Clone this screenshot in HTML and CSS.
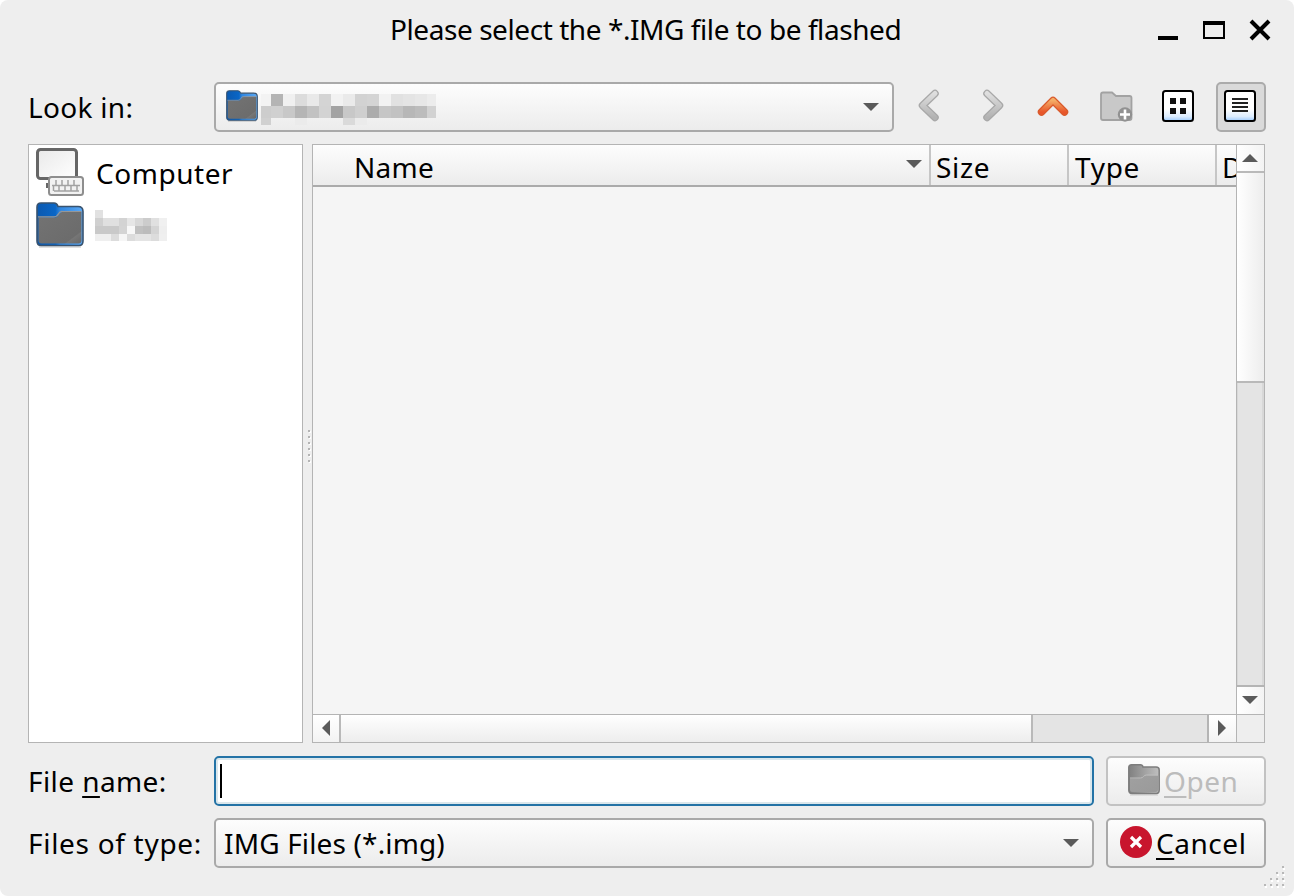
FILE: index.html
```html
<!DOCTYPE html>
<html lang="en">
<head>
<meta charset="utf-8">
<title>Please select the *.IMG file to be flashed</title>
<link rel="stylesheet" href="styles.css">
</head>
<body>
<svg class="defs" width="0" height="0">
  <defs>
    <linearGradient id="blue" x1="0" y1="0" x2="1" y2="0"><stop offset="0" stop-color="#0b59b0"/><stop offset=".4" stop-color="#0a66c6"/><stop offset=".5" stop-color="#2f86e0"/><stop offset="1" stop-color="#5ca9f5"/></linearGradient>
    <linearGradient id="front" x1="0" y1="0" x2="1" y2="1"><stop offset="0" stop-color="#737373"/><stop offset=".8" stop-color="#6c6c6c"/><stop offset=".82" stop-color="#767676"/><stop offset="1" stop-color="#666"/></linearGradient>
    <linearGradient id="gback" x1="0" y1="0" x2="1" y2="0"><stop offset="0" stop-color="#808080"/><stop offset="1" stop-color="#c0c0c0"/></linearGradient>
    <linearGradient id="gfront" x1="0" y1="0" x2="1" y2="1"><stop offset="0" stop-color="#a0a0a0"/><stop offset="1" stop-color="#9a9a9a"/></linearGradient>
    <linearGradient id="screen" x1="0" y1="0" x2="1" y2="1"><stop offset="0" stop-color="#e9e9e9"/><stop offset="1" stop-color="#fff"/></linearGradient>
    <linearGradient id="chev" x1="0" y1="0" x2="0" y2="1"><stop offset="0" stop-color="#dedede"/><stop offset="1" stop-color="#b2b2b2"/></linearGradient>
    <linearGradient id="orange" x1="0" y1="0" x2="0" y2="1"><stop offset="0" stop-color="#f4ad66"/><stop offset="1" stop-color="#e8562a"/></linearGradient>
    <linearGradient id="tile" x1="0" y1="0" x2="0" y2="1"><stop offset="0" stop-color="#fff"/><stop offset=".6" stop-color="#fff"/><stop offset=".85" stop-color="#dcedff"/><stop offset="1" stop-color="#9ccbff"/></linearGradient>
    <symbol id="folder" viewBox="0 0 48 46" preserveAspectRatio="none">
      <path d="M3 45h42" stroke="#000" stroke-opacity=".12" stroke-width="2"/>
      <path d="M1 5q0-4 4-4h13q3 0 4 3.500h20q5 0 5 5V39q0 4.500-4 4.500H5q-4 0-4-4.500z" fill="url(#blue)" stroke="#39536f" stroke-width="1.600"/>
      <path d="M2.500 15.500h16q3 0 4.500-3t4-2.500h18.500V38.500q0 3-3 3H5.500q-3 0-3-3z" fill="url(#front)"/>
      <path d="M2 14.800h16q3 0 4.500-3t4.500-2.300h18.500" fill="none" stroke="#969696" stroke-width="1.200"/>
    </symbol>
  </defs>
</svg>
<main class="dialog">
  <header class="titlebar">
    <h1 class="title">Please select the *.IMG file to be flashed</h1>
    <svg class="winbtns" width="116" height="24" viewBox="1158 18 116 24">
      <path d="M1158 38h20" stroke="#000" stroke-width="4"/>
      <rect x="1204" y="22" width="20" height="16" fill="none" stroke="#000" stroke-width="2"/>
      <path d="M1203 23h22" stroke="#000" stroke-width="4"/>
      <path d="M1251 21l18 18M1269 21l-18 18" stroke="#000" stroke-width="4"/>
    </svg>
  </header>

  <div class="row">
    <label class="label s-look">Look in:</label>
    <div class="combo look">
      <svg class="ico-sm" width="32" height="32"><use href="#folder"/></svg>
      <svg class="mosaic" width="175" height="31" viewBox="261 94 175 31" shape-rendering="crispEdges">
        <path fill="#f3f3f3" d="M261 94h10v12h-10z"/><path fill="#b4b4b4" d="M271 94h12v12h-12z"/><path fill="#f0f0f0" d="M283 94h12v12h-12z"/><path fill="#dcdcdc" d="M295 94h12v12h-12z"/><path fill="#e9e9e9" d="M307 94h12v12h-12z"/><path fill="#d4d4d4" d="M319 94h12v12h-12z"/><path fill="#f2f2f2" d="M331 94h12v12h-12z"/><path fill="#eaeaea" d="M343 94h12v12h-12z"/><path fill="#d2d2d2" d="M355 94h12v12h-12z"/><path fill="#d4d4d4" d="M367 94h12v12h-12z"/><path fill="#f2f2f2" d="M379 94h12v12h-12z"/><path fill="#e1e1e1" d="M391 94h12v12h-12z"/><path fill="#e4e4e4" d="M403 94h12v12h-12z"/><path fill="#e7e7e7" d="M415 94h12v12h-12z"/><path fill="#ececec" d="M427 94h9v12h-9z"/>
        <path fill="#cdcdcd" d="M261 106h10v12h-10z"/><path fill="#d0d0d0" d="M271 106h12v12h-12z"/><path fill="#c8c8c8" d="M283 106h12v12h-12z"/><path fill="#b5b5b5" d="M295 106h12v12h-12z"/><path fill="#c2c2c2" d="M307 106h12v12h-12z"/><path fill="#d3d3d3" d="M319 106h12v12h-12z"/><path fill="#a3a3a3" d="M331 106h12v12h-12z"/><path fill="#c8c8c8" d="M343 106h12v12h-12z"/><path fill="#cfcfcf" d="M355 106h12v12h-12z"/><path fill="#acacac" d="M367 106h12v12h-12z"/><path fill="#c6c6c6" d="M379 106h12v12h-12z"/><path fill="#c2c2c2" d="M391 106h12v12h-12z"/><path fill="#b7b7b7" d="M403 106h12v12h-12z"/><path fill="#bcbcbc" d="M415 106h12v12h-12z"/><path fill="#d2d2d2" d="M427 106h9v12h-9z"/>
        <path fill="#d0d0d0" d="M261 118h10v7h-10z"/><path fill="#ebebeb" d="M295 118h12v7h-12zM355 118h12v7h-12z"/><path fill="#dadada" d="M343 118h12v7h-12z"/>
      </svg>
      <i class="tri down"></i>
    </div>
    <svg class="tools" width="284" height="50" viewBox="912 82 284 50">
      <g fill="none" stroke-linecap="round" stroke-linejoin="round">
        <path d="M935 93.500L922.500 105.500L935 117.500M987 93.500L999.500 105.500L987 117.500" stroke="#a8a8a8" stroke-width="7.500"/>
        <path d="M935 93.500L922.500 105.500L935 117.500M987 93.500L999.500 105.500L987 117.500" stroke="url(#chev)" stroke-width="5"/>
        <path d="M1041.500 112L1053 100.500L1064.500 112" stroke="#d95a2c" stroke-width="7.500"/>
        <path d="M1041.500 112L1053 100.500L1064.500 112" stroke="url(#orange)" stroke-width="5"/>
      </g>
      <path d="M1101 94.500q0-2 2-2h9l4 3.500h13.500q2 0 2 2V118q0 2-2 2h-26.500q-2 0-2-2z" fill="#c8c8c8" stroke="#a2a2a2" stroke-width="1.800"/>
      <circle cx="1125" cy="114.500" r="7.200" fill="#919191"/>
      <path d="M1120 114.500h10M1125 109.500v10" stroke="#fff" stroke-width="2.600"/>
      <rect x="1163" y="91" width="30" height="30" rx="2.500" fill="url(#tile)" stroke="#000" stroke-width="2"/>
      <path d="M1170 98h6v6h-6zM1180 98h6v6h-6zM1170 108h6v6h-6zM1180 108h6v6h-6z" fill="#111"/>
    </svg>
    <div class="toolbtn">
      <svg width="32" height="32" viewBox="0 0 32 32">
        <rect x="1" y="1" width="30" height="30" rx="2.500" fill="url(#tile)" stroke="#000" stroke-width="2"/>
        <path d="M8 9h16M8 13h16M8 17h16M8 21h16" stroke="#222" stroke-width="2"/>
      </svg>
    </div>
  </div>

  <section class="panes">
    <div class="places">
      <div class="place">
        <svg width="48" height="48" viewBox="36 148 48 48">
          <rect x="37.500" y="149.500" width="39" height="29" rx="3" fill="url(#screen)" stroke="#666" stroke-width="3"/>
          <path d="M46 183h4v5h-4z" fill="#666"/>
          <rect x="49" y="177" width="34" height="18" rx="2.500" fill="#f2f2f2" stroke="#8e8e8e" stroke-width="2"/>
          <path d="M52 185.500h28M54 191h25" fill="none" stroke="#a2a2a2" stroke-width="1.500"/>
          <path d="M56 180v5M62 180v5M68 180v5M74 180v5M59 186v5M65 186v5M71 186v5M77 186v5M53.500 186v5" stroke="#a2a2a2" stroke-width="1.500"/>
        </svg>
        <span class="s-computer">Computer</span>
      </div>
      <div class="place">
        <svg width="48" height="46"><use href="#folder"/></svg>
        <svg class="mosaic home" width="72" height="31" viewBox="95 210 72 31" shape-rendering="crispEdges">
          <path fill="#e1e1e1" d="M95 210h8v8h-8z"/>
          <path fill="#d0d0d0" d="M95 218h8v8h-8z"/><path fill="#e0e0e0" d="M103 218h16v8h-16zM151 218h8v8h-8z"/><path fill="#d3d3d3" d="M119 218h8v8h-8z"/><path fill="#e6e6e6" d="M127 218h8v8h-8z"/><path fill="#d8d8d8" d="M135 218h8v8h-8z"/><path fill="#ccc" d="M143 218h8v8h-8z"/><path fill="#f0f0f0" d="M159 218h8v8h-8z"/>
          <path fill="#c9c9c9" d="M95 226h24v8H95z"/><path fill="#d4d4d4" d="M119 226h8v8h-8zM151 226h8v8h-8z"/><path fill="#f8f8f8" d="M127 226h8v8h-8z"/><path fill="#c0c0c0" d="M135 226h8v8h-8z"/><path fill="#bcbcbc" d="M143 226h8v8h-8z"/><path fill="#eee" d="M159 226h8v8h-8z"/>
          <path fill="#efefef" d="M95 234h16v7H95zM159 234h8v7h-8z"/><path fill="#dcdcdc" d="M111 234h8v7h-8zM127 234h8v7h-8zM151 234h8v7h-8z"/><path fill="#f6f6f6" d="M119 234h8v7h-8z"/><path fill="#e4e4e4" d="M135 234h16v7h-16z"/>
        </svg>
      </div>
    </div>
    <div class="splitter"><i></i><i></i><i></i><i></i><i></i><i></i></div>
    <div class="files">
      <div class="view">
        <div class="thead">
          <div class="th name"><span class="s-name">Name</span><i class="tri down"></i></div>
          <div class="th size"><span class="s-short">Size</span></div>
          <div class="th type"><span class="s-short">Type</span></div>
          <div class="th date"><span>D</span></div>
        </div>
      </div>
      <div class="vscroll">
        <div class="vbtn"><i class="tri up"></i></div>
        <div class="vthumb"></div>
        <div class="vtrack"></div>
        <div class="vbtn last"><i class="tri down"></i></div>
      </div>
      <div class="hscroll">
        <div class="hbtn"><i class="tri left"></i></div>
        <div class="hthumb"></div>
        <div class="htrack"></div>
        <div class="hbtn last"><i class="tri right"></i></div>
      </div>
      <div class="corner"></div>
    </div>
  </section>

  <div class="row filename">
    <label class="label s-file">File <u>n</u>ame:</label>
    <div class="input"><i class="caret"></i></div>
    <button class="btn open" disabled>
      <svg width="32" height="32" viewBox="0 0 32 32">
        <path d="M2 31h28" stroke="#000" stroke-opacity=".1" stroke-width="1.500"/>
        <path d="M.8 3.500q0-2.700 2.700-2.700h9q2 0 2.500 2.200h13q3.200 0 3.200 3V26q0 3.500-3 3.500H4Q.8 29.500.8 26z" fill="url(#gback)" stroke="#7d7d7d" stroke-width="1.500"/>
        <path d="M2 14.500h10.500q2 0 3-1.500t3-1.500H30V25.500q0 2.500-2.500 2.500h-23Q2 28 2 25.500z" fill="url(#gfront)"/>
        <path d="M2 14h10.500q2 0 3-1.500t3-1.500H30" fill="none" stroke="#bdbdbd"/>
      </svg><span class="s-btn"><u>O</u>pen</span>
    </button>
  </div>

  <div class="row">
    <label class="label s-types">Files of type:</label>
    <div class="combo filetype"><span class="s-img">IMG Files (*.img)</span><i class="tri down"></i></div>
    <button class="btn cancel">
      <svg width="32" height="32" viewBox="0 0 32 32">
        <circle cx="16" cy="16" r="16" fill="#c8152d"/>
        <path d="M11 11l10 10M21 11L11 21" stroke="#fff" stroke-width="3.200"/>
      </svg><span class="s-btn"><u>C</u>ancel</span>
    </button>
  </div>
  <svg class="grip" width="22" height="22" viewBox="1264 866 22 22" shape-rendering="crispEdges">
    <path fill="#fff" d="M1283 868h2v2h-2zM1277 874h2v2h-2zM1283 874h2v2h-2zM1271 880h2v2h-2zM1277 880h2v2h-2zM1283 880h2v2h-2zM1265 886h2v2h-2zM1271 886h2v2h-2zM1277 886h2v2h-2zM1283 886h2v2h-2z"/>
    <path fill="#b8b8b8" d="M1282 866h2v2h-2zM1276 872h2v2h-2zM1282 872h2v2h-2zM1270 878h2v2h-2zM1276 878h2v2h-2zM1282 878h2v2h-2zM1264 884h2v2h-2zM1270 884h2v2h-2zM1276 884h2v2h-2zM1282 884h2v2h-2z"/>
  </svg>
</main>
</body>
</html>
```
FILE: styles.css
```css
* { box-sizing: border-box; }
body { margin: 0; background: #fff; font: 28px/38px "Noto Sans", sans-serif; color: #000; }
.defs { position: absolute; }
svg { display: block; flex: none; }

.dialog {
  position: relative;
  width: 1294px;
  height: 896px;
  padding: 0 28px;
  display: flex;
  flex-direction: column;
  background: #eee;
  border-radius: 8px;
}

/* title bar */
.titlebar { height: 60px; margin-bottom: 22px; display: grid; grid-template-columns: 1fr auto; align-items: center; }
.title { margin: 0; padding: 0 0 2px 362px; font: inherit; letter-spacing: -0.43px; white-space: nowrap; }
.winbtns { margin-right: -8px; }

/* labelled rows */
.row { height: 50px; margin-bottom: 12px; display: flex; align-items: center; }
.filename { margin-top: 1px; }
.label { width: 186px; flex: none; padding-bottom: 1px; white-space: nowrap; }
u { text-decoration: underline; text-decoration-thickness: 2px; text-underline-offset: 4px; text-decoration-skip-ink: none; }

.combo, .btn {
  height: 50px;
  border: 2px solid #a9a9a9;
  border-radius: 5px;
  background: linear-gradient(#fdfdfd, #ececec);
  display: flex;
  align-items: center;
}
.combo .tri { margin-left: auto; margin-right: 13px; }
.look { width: 680px; margin-right: 18px; padding-left: 10px; }
.ico-sm { margin-right: 3px; margin-top: -2px; }
.mosaic { margin-top: 5px; }
.filetype { width: 880px; padding-left: 8px; }
.toolbtn {
  width: 50px;
  height: 50px;
  margin-left: 20px;
  padding: 6px;
  border: 2px solid #ababab;
  border-radius: 5px;
  background: #dadada;
}

/* triangles */
.tri { flex: none; border: 0 solid transparent; }
.tri.down { border-width: 8px 8px 0; border-top-color: #5a5a5a; }
.tri.up { border-width: 0 8px 8px; border-bottom-color: #5a5a5a; }
.tri.left { border-width: 8px 8px 8px 0; border-right-color: #5a5a5a; }
.tri.right { border-width: 8px 0 8px 8px; border-left-color: #5a5a5a; }

/* panes */
.panes { height: 599px; margin-bottom: 12px; display: flex; }
.places { width: 275px; border: 1px solid #b4b4b4; background: #fff; padding: 3px 7px; }
.place { height: 54px; display: flex; align-items: flex-start; }
.place span { margin: 6px 0 0 12px; }
.place .home { margin: 8px 0 0 11px; }
.splitter { width: 9px; display: flex; flex-direction: column; align-items: center; justify-content: center; gap: 4px; padding: 4px 0 0 3px; }
.splitter i { width: 2px; height: 2px; background: #b4b4b4; box-shadow: 1px 1px #fff; }
.files {
  width: 953px;
  border: 1px solid #b4b4b4;
  display: grid;
  grid-template-columns: 923px 28px;
  grid-template-rows: 569px 28px;
}
.view { background: #f5f5f5; overflow: hidden; }
.thead { height: 42px; display: flex; background: linear-gradient(#fdfdfd, #ececec); border-bottom: 2px solid #ababab; }
.th { flex: none; display: flex; align-items: center; padding-top: 3px; border-right: 2px solid #c6c6c6; }
.th.name { width: 618px; padding-left: 41px; }
.th.name .tri { margin: -6px 7px 0 auto; }
.th.size { width: 138px; padding-left: 5px; }
.th.type { width: 148px; padding-left: 6px; }
.th.date { width: 100px; padding-left: 5px; }

.vscroll { display: grid; grid-template-rows: 26px 212px 1fr 29px; border-left: 1px solid #b4b4b4; }
.vbtn, .hbtn { display: flex; align-items: center; justify-content: center; padding-right: 1px; background: linear-gradient(90deg, #fff, #f3f3f3); }
.vthumb { border: solid #b9b9b9; border-width: 2px 0; background: linear-gradient(90deg, #fff, #ededed); }
.vtrack { background: #e4e4e4; border: solid #d8d8d8; border-width: 0 2px 0 1px; }
.vbtn.last { border-top: 2px solid #b4b4b4; padding-bottom: 2px; }
.hscroll { display: grid; grid-template-columns: 26px 694px 1fr 29px; border-top: 1px solid #b4b4b4; }
.hthumb { border: solid #b9b9b9; border-width: 0 2px; background: linear-gradient(#fff, #ededed); }
.htrack { background: #e4e4e4; }
.hbtn { background: linear-gradient(#fff, #f3f3f3); padding: 0 0 2px; }
.hbtn.last { border-left: 2px solid #b4b4b4; padding-right: 2px; }
.corner { border: solid #b4b4b4; border-width: 1px 0 0 1px; background: #eee; }

/* bottom controls */
.input {
  width: 880px;
  height: 50px;
  padding: 6px 4px;
  border: 2px solid #2473a6;
  border-radius: 5px;
  background: #fff;
  box-shadow: inset 0 0 0 2px #dbe7ec;
}
.caret { display: block; width: 2px; height: 34px; background: #000; }
.btn { width: 160px; margin-left: 12px; padding: 0; font: inherit; color: #000; }
.btn svg { margin-top: -2px; }
.btn.open { padding-left: 20px; border-color: #c2c2c2; color: #bcbcbc; }
.btn.cancel { padding-left: 12px; }
.btn span { margin-left: 4px; }

.grip { position: absolute; right: 8px; bottom: 8px; }

/* tracking */
.s-look { letter-spacing: .3px; }
.s-computer { letter-spacing: .55px; }
.s-name { letter-spacing: .3px; }
.s-short { letter-spacing: .7px; }
.s-file { letter-spacing: .42px; }
.s-types { letter-spacing: .7px; }
.s-img { letter-spacing: .15px; }
.s-btn { letter-spacing: .55px; }
```
